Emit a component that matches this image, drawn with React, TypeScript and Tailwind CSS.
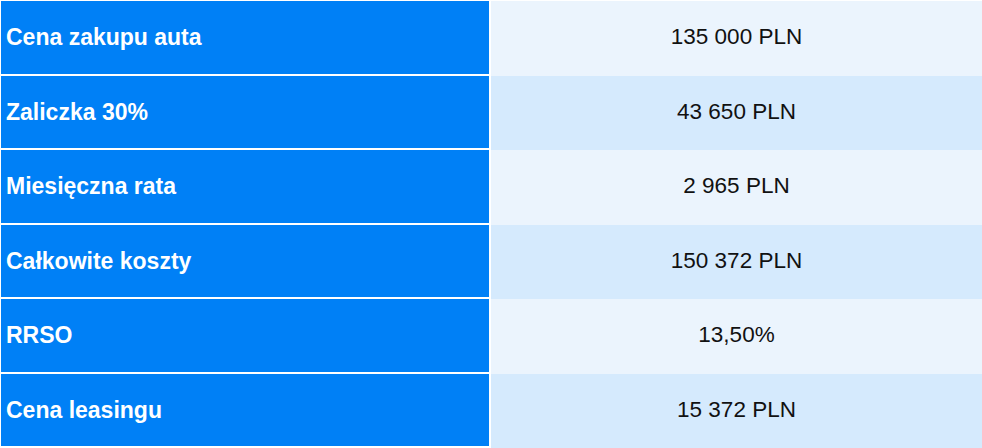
const rows = [
  { label: 'Cena zakupu auta', value: '135 000 PLN' },
  { label: 'Zaliczka 30%', value: '43 650 PLN' },
  { label: 'Miesięczna rata', value: '2 965 PLN' },
  { label: 'Całkowite koszty', value: '150 372 PLN' },
  { label: 'RRSO', value: '13,50%' },
  { label: 'Cena leasingu', value: '15 372 PLN' },
];

export default function App() {
  return (
    <div
      className="w-[982px] h-[448px] bg-white pt-px flex flex-col overflow-hidden"
      style={{ fontFamily: '"Liberation Sans", Arial, sans-serif' }}
    >
      {rows.map((row, i) => (
        <div key={row.label} className="flex flex-1">
          <div className="w-[491px] pl-px pr-[2px] pb-[2px] bg-white flex">
            <div className="flex-1 bg-[#0080f6] flex items-center pl-[5px] text-white font-bold text-[23px]">
              {row.label}
            </div>
          </div>
          <div
            className={`flex-1 flex items-center justify-center text-[22.5px] text-[#111] pb-[2px] ${
              i % 2 === 0 ? 'bg-[#ebf4fd]' : 'bg-[#d5eafd]'
            }`}
          >
            {row.value}
          </div>
        </div>
      ))}
    </div>
  );
}
